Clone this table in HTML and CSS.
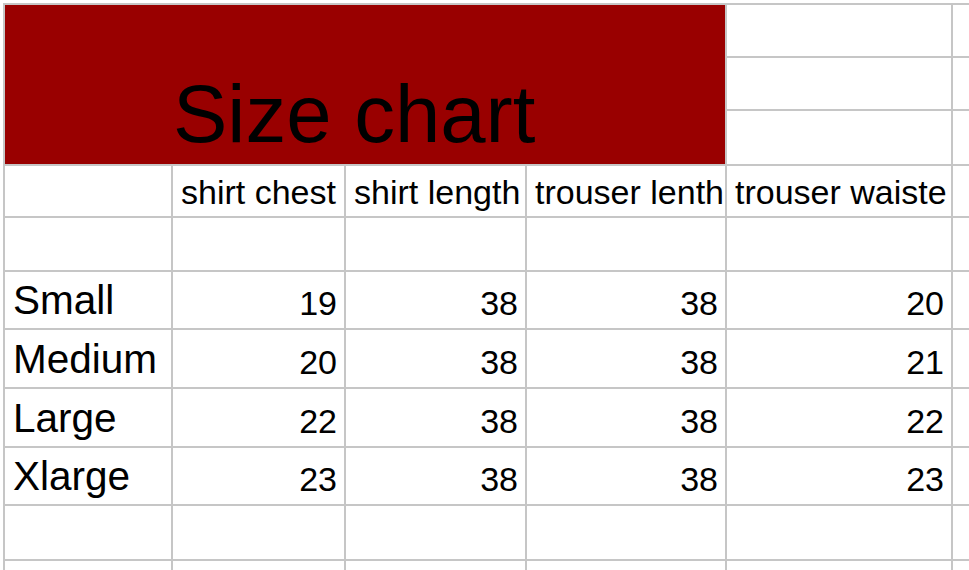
FILE: index.html
```html
<!DOCTYPE html>
<html lang="en">
<head>
<meta charset="utf-8">
<title>Size chart</title>
<link rel="stylesheet" href="styles.css">
</head>
<body>
<div class="frame">
  <div class="sheet">
    <div class="cell title">Size chart</div>
    <div class="cell"></div><div class="cell"></div>
    <div class="cell"></div><div class="cell"></div>
    <div class="cell"></div><div class="cell"></div>

    <div class="cell"></div>
    <div class="cell hdr">shirt chest</div>
    <div class="cell hdr">shirt length</div>
    <div class="cell hdr">trouser lenth</div>
    <div class="cell hdr">trouser waiste</div>
    <div class="cell"></div>

    <div class="cell"></div><div class="cell"></div><div class="cell"></div><div class="cell"></div><div class="cell"></div><div class="cell"></div>

    <div class="cell label">Small</div>
    <div class="cell num">19</div>
    <div class="cell num">38</div>
    <div class="cell num">38</div>
    <div class="cell num">20</div>
    <div class="cell"></div>

    <div class="cell label">Medium</div>
    <div class="cell num">20</div>
    <div class="cell num">38</div>
    <div class="cell num">38</div>
    <div class="cell num">21</div>
    <div class="cell"></div>

    <div class="cell label">Large</div>
    <div class="cell num">22</div>
    <div class="cell num">38</div>
    <div class="cell num">38</div>
    <div class="cell num">22</div>
    <div class="cell"></div>

    <div class="cell label">Xlarge</div>
    <div class="cell num">23</div>
    <div class="cell num">38</div>
    <div class="cell num">38</div>
    <div class="cell num">23</div>
    <div class="cell"></div>

    <div class="cell"></div><div class="cell"></div><div class="cell"></div><div class="cell"></div><div class="cell"></div><div class="cell"></div>
    <div class="cell"></div><div class="cell"></div><div class="cell"></div><div class="cell"></div><div class="cell"></div><div class="cell"></div>
  </div>
</div>
</body>
</html>
```

FILE: styles.css
```css
html, body {
  margin: 0;
  padding: 0;
  background: #ffffff;
}

.frame {
  width: 969px;
  height: 570px;
  overflow: hidden;
  padding: 3px 0 0 3px;
  box-sizing: border-box;
  background: #ffffff;
}

.sheet {
  display: grid;
  grid-template-columns: 166px 171px 179px 198px 224px 100px;
  grid-template-rows: 51px 51px 53px 50px 52px 56px 57px 57px 56px 53px 40px;
  gap: 2px;
  padding: 2px 0 0 2px;
  width: max-content;
  background: #c6c6c6;
  font-family: "Liberation Sans", Arial, sans-serif;
  color: #000000;
}

.cell {
  background: #ffffff;
  display: flex;
  align-items: flex-end;
  white-space: nowrap;
  line-height: 1.2;
  box-sizing: border-box;
  overflow: visible;
}

.title {
  grid-column: 1 / 5;
  grid-row: 1 / 4;
  background: #990000;
  font-size: 81.5px;
  padding-left: 168px;
  padding-bottom: 1.5px;
  color: #000000;
}

.hdr {
  font-size: 34px;
  padding-left: 8px;
  padding-bottom: 3.5px;
}

.label {
  font-size: 40.5px;
  padding-left: 8px;
  padding-bottom: 3px;
}

.num {
  font-size: 34px;
  justify-content: flex-end;
  padding-right: 7px;
  padding-bottom: 4.5px;
}
```
